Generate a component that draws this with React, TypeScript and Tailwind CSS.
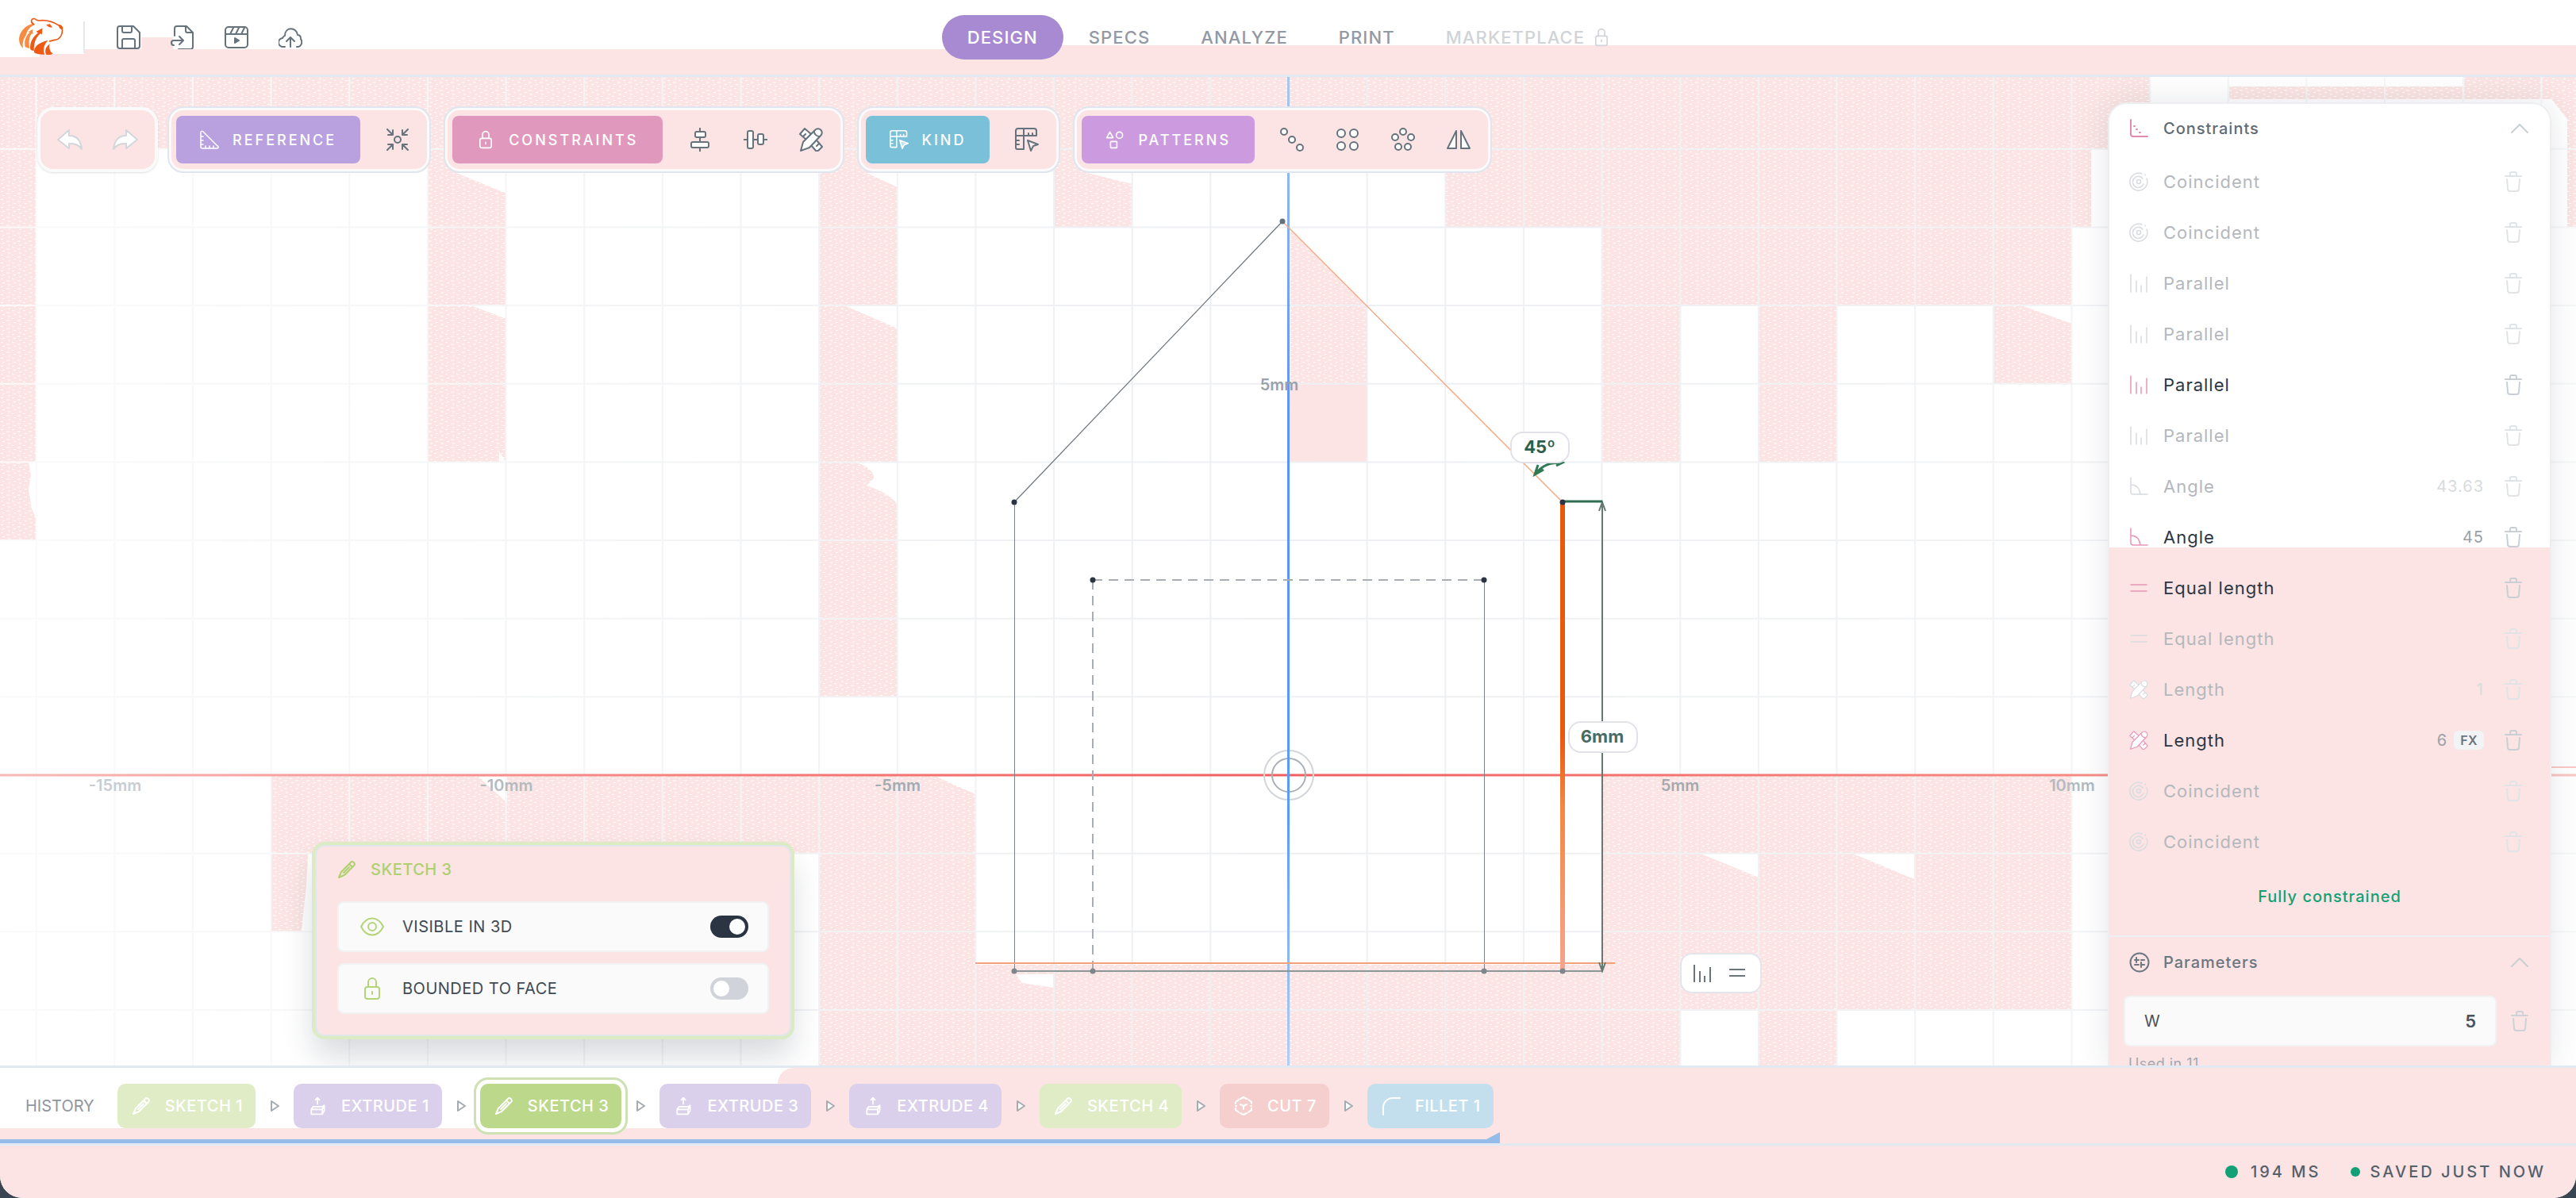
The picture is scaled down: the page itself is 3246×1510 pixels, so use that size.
import { useState, type ReactNode } from 'react'

type IconProps = { className?: string }

function Svg({ className = '', box = '0 0 30 30', children }: { className?: string; box?: string; children: ReactNode }) {
  return (
    <svg
      viewBox={box}
      className={`shrink-0 ${className}`}
      fill="none"
      stroke="currentColor"
      strokeWidth="2"
      strokeLinecap="round"
      strokeLinejoin="round"
      aria-hidden="true"
    >
      {children}
    </svg>
  )
}

const Logo = () => (
  <svg viewBox="70 66 172 148" className="h-[49px] w-[57px] shrink-0" aria-hidden="true">
    <path d="M128 92C96 99 75 124 73 150c0 16 5 28 15 36-3-19 1-34 11-48 5-20 16-34 33-41Z" fill="#f68b42" />
    <path d="M96 180c-5-22 4-42 18-54l-6-2 16-10 2 18-5-2c-10 14-12 32-8 56-8 0-14-2-17-6Z" fill="#f68b42" />
    <path d="M116 190c-3-26 9-46 29-62l-7-5 24-13-2 24-6-4c-17 16-26 36-24 66-7 0-12-2-14-6Z" fill="#ee5a15" />
    <path d="M130 202c0-22 16-36 54-46-16 16-21 34-14 54-17 1-31-2-40-8Z" fill="#ee5a15" />
    <path d="M176 210c-7-18 0-30 13-40-2 18 2 30 13 37-7 4-17 5-26 3Z" fill="#ee5a15" />
    <path
      d="M131 96c-8-4-12-10-11-15 1-8 13-10 18-3l10 3c26-3 52 3 74 17 10 1 17 7 15 15 2 17-5 31-17 39-12 3-22 4-32 8"
      fill="none"
      stroke="#ee5a15"
      strokeWidth="5"
      strokeLinejoin="round"
    />
    <path d="m176 97 14-3 10 12c-6 2-12 1-16-2Z" fill="#ee5a15" />
    <path d="m222 98 15 6 1 12-10-5Z" fill="#ee5a15" />
  </svg>
)

const SaveIcon = ({ className }: IconProps) => (
  <Svg className={className}>
    <path d="M5 1h16l8 8v17a3 3 0 0 1-3 3H4a3 3 0 0 1-3-3V4a3 3 0 0 1 3-3Z" />
    <path d="M7 1v6a2 2 0 0 0 2 2h8a2 2 0 0 0 2-2V1M7 29V19a2 2 0 0 1 2-2h12a2 2 0 0 1 2 2v10" />
  </Svg>
)
const ImportIcon = ({ className }: IconProps) => (
  <Svg className={className}>
    <path d="M5 13V4a3 3 0 0 1 3-3h12l8 8v18a3 3 0 0 1-3 3H10M19 1v6a2 2 0 0 0 2 2h7" />
    <path d="M4 25a3 3 0 0 1 0-6h11M11 14l5 5-5 5" />
  </Svg>
)
const ClipIcon = ({ className }: IconProps) => (
  <Svg className={className}>
    <rect x="1" y="2" width="28" height="26" rx="4" />
    <path d="M1 11h28M11 3 7 11M18 3l-4 8M25 3l-4 8" />
    <path d="m13 16 5 3-5 3Z" fill="currentColor" />
  </Svg>
)
const CloudIcon = ({ className }: IconProps) => (
  <Svg className={className}>
    <path d="M8 27H6a5 5 0 0 1-1-11c1-2 2-3 3-3 0-12 15-11 16-1 3 0 4 2 4 5 3 5 0 10-4 10h-1M15 27V15M10 20l5-5 5 5" />
  </Svg>
)
const LockIcon = ({ className }: IconProps) => (
  <Svg className={className} box="0 0 22 30">
    <rect x="2" y="13" width="18" height="15" rx="3" />
    <path d="M6 13V7a5 5 0 0 1 10 0v6M11 19v3" />
  </Svg>
)
const ArrowIcon = ({ className }: IconProps) => (
  <Svg className={className} box="0 0 32 26">
    <path d="M1 13 15 1v7c10 0 15 7 16 17-4-6-9-7-16-7v6Z" fill="#fff" />
  </Svg>
)
const SetSquareIcon = ({ className }: IconProps) => (
  <Svg className={className} box="0 0 24 24">
    <path d="M1 3c0-2 2-2 3-1l18 18c2 1 1 3-1 3H3a2 2 0 0 1-2-2ZM1 8h3M1 13h3M1 18h3M7 23v-3M12 23v-3M17 23v-3" strokeWidth="1.5" />
  </Svg>
)
const ConvergeIcon = ({ className }: IconProps) => (
  <Svg className={className}>
    <circle cx="15" cy="15" r="4" />
    <path d="m2 2 7 7M9 3v6H3M28 2l-7 7M21 3v6h6M2 28l7-7M9 27v-6H3M28 28l-7-7M21 27v-6h6" />
  </Svg>
)
const AlignVIcon = ({ className }: IconProps) => (
  <Svg className={className}>
    <path d="M15 0v5M15 12v6M15 25v5" />
    <rect x="9" y="5" width="13" height="7" rx="2" fill="#fff" />
    <rect x="4" y="18" width="22" height="7" rx="2" fill="#fff" />
  </Svg>
)
const AlignHIcon = ({ className }: IconProps) => (
  <Svg className={className}>
    <path d="M0 15h5M12 15h6M25 15h5" />
    <rect x="5" y="4" width="7" height="22" rx="2" fill="#fff" />
    <rect x="18" y="8" width="7" height="13" rx="2" fill="#fff" />
  </Svg>
)
const ToolsIcon = ({ className }: IconProps) => (
  <Svg className={className}>
    <path d="M7 1 1 8l8 7M7 1l8 7-5 6M5 11l3-3M15 22l6 7c2 1 3 0 4-1l4-4-6-7" fill="#fff" />
    <path d="M20 3c5-5 12 2 7 7L13 25 2 29l3-11Z" fill="#fff" />
    <path d="M19 5c0 3 3 6 7 6M22 23l3-3" />
  </Svg>
)
const RulerIcon = ({ className }: IconProps) => (
  <Svg className={className}>
    <path d="M4 1h20a3 3 0 0 1 3 3v6H11v17H3a2 2 0 0 1-2-2V4a3 3 0 0 1 3-3ZM1 10h10V1M17 10V7M22 10V7M1 16h4M1 21h4" />
    <path d="m16 16 13 5-6 2-3 6Z" fill="#fff" fillOpacity=".5" />
  </Svg>
)
const ShapesIcon = ({ className }: IconProps) => (
  <Svg className={className}>
    <path d="M7 3 2 12h10Z" />
    <circle cx="22" cy="8" r="5" />
    <rect x="8" y="18" width="10" height="10" rx="1" />
  </Svg>
)
const DiagonalDotsIcon = ({ className }: IconProps) => (
  <Svg className={className}>
    <circle cx="5" cy="5" r="4" fill="#fff" />
    <circle cx="15" cy="15" r="4" fill="#fff" />
    <circle cx="25" cy="25" r="4" fill="#fff" />
  </Svg>
)
const GridDotsIcon = ({ className }: IconProps) => (
  <Svg className={className}>
    <circle cx="7" cy="7" r="5" fill="#fff" />
    <circle cx="23" cy="7" r="5" fill="#fff" />
    <circle cx="7" cy="23" r="5" fill="#fff" />
    <circle cx="23" cy="23" r="5" fill="#fff" />
  </Svg>
)
const RingDotsIcon = ({ className }: IconProps) => (
  <Svg className={className}>
    <circle cx="15" cy="5" r="4" fill="#fff" />
    <circle cx="5" cy="12" r="4" fill="#fff" />
    <circle cx="25" cy="12" r="4" fill="#fff" />
    <circle cx="9" cy="24" r="4" fill="#fff" />
    <circle cx="21" cy="24" r="4" fill="#fff" />
  </Svg>
)
const MirrorIcon = ({ className }: IconProps) => (
  <Svg className={className}>
    <path d="M12 4v22H1ZM18 4v22h11Z" fill="#fff" />
  </Svg>
)
const PencilIcon = ({ className }: IconProps) => (
  <Svg className={className} box="0 0 24 24">
    <path d="M17 3c2-3 7 2 4 4L9 19l-7 3 3-7ZM15 5l4 4M8 16l7-7" />
  </Svg>
)
const ExtrudeIcon = ({ className }: IconProps) => (
  <Svg className={className} box="0 0 24 28">
    <path d="M12 11V2M9 5l3-3 3 3M6 15h13l3-2v8l-3 5H3v-7ZM3 19h16v7M19 19l3-6" />
  </Svg>
)
const CutIcon = ({ className }: IconProps) => (
  <Svg className={className} box="0 0 24 24">
    <path d="m8 3 4-2 4 2M2 9V7l4-3M18 4l4 3v2M2 15v2l4 3M18 20l4-3v-2M8 21l4 2 4-2M12 12v4M12 12l-4-2M12 12l4-2M2 12h1M21 12h1" />
  </Svg>
)
const FilletIcon = ({ className }: IconProps) => (
  <Svg className={className} box="0 0 24 24">
    <path d="M2 23v-9A12 12 0 0 1 14 2h9" />
  </Svg>
)
const EyeIcon = ({ className }: IconProps) => (
  <Svg className={className} box="0 0 30 24">
    <path d="M1 12C8-2 22-2 29 12 22 26 8 26 1 12Z" />
    <circle cx="15" cy="12" r="5" />
  </Svg>
)
const CornerIcon = ({ className }: IconProps) => (
  <Svg className={className} box="0 0 24 24">
    <path d="M2 1v18a3 3 0 0 0 3 3h18" />
    <path d="M6 9h1M9 13h1M13 17h1" />
  </Svg>
)
const CoincidentIcon = ({ className }: IconProps) => (
  <Svg className={className} box="0 0 24 24">
    <path d="M16 2A11 11 0 1 0 22 8M17 8a7 7 0 1 0 1 7M20 3v1" />
    <circle cx="12" cy="12" r="2.5" />
  </Svg>
)
const ParallelIcon = ({ className }: IconProps) => (
  <Svg className={className} box="0 0 24 24">
    <path d="M2 1v22M9 9v14M15 15v8M22 4v19" />
  </Svg>
)
const AngleIcon = ({ className }: IconProps) => (
  <Svg className={className} box="0 0 24 24">
    <path d="M2 1v18a3 3 0 0 0 3 3h18M2 10c7 0 11 4 12 12" />
  </Svg>
)
const EqualIcon = ({ className }: IconProps) => (
  <Svg className={className} box="0 0 24 24">
    <path d="M2 8h20M2 16h20" />
  </Svg>
)
const ParamsIcon = ({ className }: IconProps) => (
  <Svg className={className} box="0 0 26 26">
    <circle cx="13" cy="13" r="11.5" />
    <path d="M7 10h5M9 7v6M15 10h4M7 16h5M15 13v6M15 16h4" />
  </Svg>
)
const TrashIcon = ({ className = '' }: IconProps) => (
  <Svg className={`h-[26px] w-[24px] ${className}`} box="0 0 24 26">
    <path d="M2 6h20M8 6V3a2 2 0 0 1 2-2h4a2 2 0 0 1 2 2v3M4 10l1 12a3 3 0 0 0 3 3h8a3 3 0 0 0 3-3l1-12" />
  </Svg>
)
const ChevronIcon = () => (
  <Svg className="h-[12px] w-[24px] text-[#c9d0d4]" box="0 0 24 12">
    <path d="M2 11 12 1l10 10" />
  </Svg>
)

const fileActions = [
  { label: 'Save', icon: SaveIcon },
  { label: 'Import', icon: ImportIcon },
  { label: 'Render', icon: ClipIcon },
  { label: 'Upload', icon: CloudIcon },
]

const tabs = ['DESIGN', 'SPECS', 'ANALYZE', 'PRINT']

const toolGroups = [
  { label: 'REFERENCE', icon: SetSquareIcon, color: 'bg-[#b9a0de]', tools: [{ label: 'Converge', icon: ConvergeIcon }] },
  {
    label: 'CONSTRAINTS',
    icon: LockIcon,
    color: 'bg-[#e099bd]',
    tools: [
      { label: 'Vertical', icon: AlignVIcon },
      { label: 'Horizontal', icon: AlignHIcon },
      { label: 'Length', icon: ToolsIcon },
    ],
  },
  { label: 'KIND', icon: RulerIcon, color: 'bg-[#7bc0d9]', tools: [{ label: 'Select kind', icon: RulerIcon }] },
  {
    label: 'PATTERNS',
    icon: ShapesIcon,
    color: 'bg-[#cc9bdf]',
    tools: [
      { label: 'Linear', icon: DiagonalDotsIcon },
      { label: 'Grid', icon: GridDotsIcon },
      { label: 'Circular', icon: RingDotsIcon },
      { label: 'Mirror', icon: MirrorIcon },
    ],
  },
]

const constraints = [
  { name: 'Coincident', icon: CoincidentIcon },
  { name: 'Coincident', icon: CoincidentIcon },
  { name: 'Parallel', icon: ParallelIcon },
  { name: 'Parallel', icon: ParallelIcon },
  { name: 'Parallel', icon: ParallelIcon, active: true },
  { name: 'Parallel', icon: ParallelIcon },
  { name: 'Angle', icon: AngleIcon, value: '43.63' },
  { name: 'Angle', icon: AngleIcon, value: '45', active: true },
  { name: 'Equal length', icon: EqualIcon, active: true },
  { name: 'Equal length', icon: EqualIcon },
  { name: 'Length', icon: ToolsIcon, value: '1' },
  { name: 'Length', icon: ToolsIcon, value: '6', fx: true, active: true },
  { name: 'Coincident', icon: CoincidentIcon },
  { name: 'Coincident', icon: CoincidentIcon },
]

const history = [
  { name: 'SKETCH 1', icon: PencilIcon, color: 'bg-[#dfecc6]' },
  { name: 'EXTRUDE 1', icon: ExtrudeIcon, color: 'bg-[#dbd0eb]' },
  { name: 'SKETCH 3', icon: PencilIcon, color: 'bg-[#bcd88a] shadow-[0_0_0_5px_#fff,0_0_0_8px_#cfe0b4]' },
  { name: 'EXTRUDE 3', icon: ExtrudeIcon, color: 'bg-[#dbd0eb]' },
  { name: 'EXTRUDE 4', icon: ExtrudeIcon, color: 'bg-[#dbd0eb]' },
  { name: 'SKETCH 4', icon: PencilIcon, color: 'bg-[#dfecc6]' },
  { name: 'CUT 7', icon: CutIcon, color: 'bg-[#f4cfcd]' },
  { name: 'FILLET 1', icon: FilletIcon, color: 'bg-[#c3dfed]' },
]

// Grid geometry, in drawing units
const CX = 1624
const CY = 977
const STEP = 98.65
const gx = (n: number) => CX + n * STEP
const gy = (n: number) => CY + n * STEP

// Shaded cells: column from/to, row from/to
const shaded = [
  [-17, 11, -9, -8],
  [-17, -16, -8, -3],
  [-11, -10, -8, -4],
  [-6, -5, -8, -1],
  [-3, -2, -8, -7],
  [2, 10.25, -8, -7],
  [4, 10, -7, -6],
  [4, 5, -6, -4],
  [6, 7, -6, -4],
  [9, 10, -6, -5],
  [-13, -4, 0, 1],
  [-13, -12.5, 1, 2],
  [-6, -4, 1, 4],
  [4, 10, 0, 3],
  [-4, 5, 2.42, 4],
  [6, 7, 3, 4],
]

const axisLabels = [
  { text: '-15mm', x: 145, y: 997, color: '#c9cdd1' },
  { text: '-10mm', x: 638, y: 997, color: '#b4babf' },
  { text: '-5mm', x: 1131, y: 997, color: '#a3aab0' },
  { text: '5mm', x: 2117, y: 997, color: '#a3aab0' },
  { text: '10mm', x: 2611, y: 997, color: '#b4babf' },
  { text: '5mm', x: 1612, y: 492, color: '#9aa2a9' },
]

const points = [
  [1278, 633, '#2b3442'],
  [1969, 633, '#2b3442'],
  [1377, 731, '#2b3442'],
  [1870, 731, '#2b3442'],
  [1616, 279, '#66707a'],
  [1278, 1224, '#7d878b'],
  [1377, 1224, '#7d878b'],
  [1870, 1224, '#7d878b'],
  [1969, 1224, '#7d878b'],
] as const

function Drawing() {
  return (
    <svg viewBox="0 97 3246 1246" preserveAspectRatio="xMidYMid slice" className="absolute inset-0 h-full w-full" fill="none">
      <defs>
        <pattern id="stipple" width="14" height="10" patternUnits="userSpaceOnUse">
          <rect width="14" height="10" fill="#fbe4e3" />
          <path d="M1 1.5h3M8 4h4M3 6.5h3M10 9h3" stroke="#fff" strokeWidth="1" />
        </pattern>
        <linearGradient id="grid" x1="0" x2="3246" y1="0" y2="0" gradientUnits="userSpaceOnUse">
          <stop offset="0" stopColor="#fafafa" />
          <stop offset=".35" stopColor="#f1f2f4" />
          <stop offset=".5" stopColor="#eeeff2" />
          <stop offset=".7" stopColor="#f1f2f4" />
          <stop offset="1" stopColor="#f6f7f8" />
        </linearGradient>
        <linearGradient id="xAxis" x1="0" x2="3246" y1="0" y2="0" gradientUnits="userSpaceOnUse">
          <stop offset="0" stopColor="#f8b9b6" />
          <stop offset=".3" stopColor="#f47a76" />
          <stop offset=".5" stopColor="#f0605f" />
          <stop offset=".8" stopColor="#f58a82" />
          <stop offset="1" stopColor="#fbc8c5" />
        </linearGradient>
        <linearGradient id="yAxis" x1="0" x2="0" y1="97" y2="1343" gradientUnits="userSpaceOnUse">
          <stop offset="0" stopColor="#a9c8ee" />
          <stop offset=".2" stopColor="#74a7f5" />
          <stop offset=".35" stopColor="#5b93f7" />
          <stop offset=".75" stopColor="#5b9bf5" />
          <stop offset="1" stopColor="#b1cefa" />
        </linearGradient>
        <linearGradient id="edge" x1="0" x2="0" y1="633" y2="1224" gradientUnits="userSpaceOnUse">
          <stop offset=".5" stopColor="#ea580c" />
          <stop offset=".65" stopColor="#f3883f" />
          <stop offset="1" stopColor="#f4a58e" />
        </linearGradient>
      </defs>

      <rect y="97" width="3246" height="1246" fill="#fff" />
      {shaded.map(([x0, x1, y0, y1]) => (
        <rect key={`${x0}/${y0}`} x={gx(x0)} y={gy(y0)} width={(x1 - x0) * STEP} height={(y1 - y0) * STEP} fill="url(#stipple)" />
      ))}
      <path d="M2809 109h296V97h141v190h-11V150l-20-25H2809Z" fill="url(#stipple)" />
      <path d="M1626 290 1722 386v99h-96Z" fill="url(#stipple)" />
      <path d="M1624 484h98v99h-98Z" fill="#fbe4e3" />
      {/* notches in the shading */}
      <path
        d="M575 218h64v26ZM596 386h42v16ZM638 583l-9-14v14ZM1066 386h65v28ZM1131 583h-53c15 4 24 12 23 20l-9 9c18 6 32 14 39 24ZM1180 979h49v22ZM603 979h36v33ZM2143 1076h73v30ZM2335 1076h77v32ZM1280 1228h48v17l-40-6ZM2550 386h61v22ZM48 583H36l3 16-3 18 4 24 6 14h2ZM1092 218h39v18ZM1370 218h57v14ZM380 1174c4-40 7-60 8-98h10v98Z"
        fill="#fff"
      />

      {Array.from({ length: 33 }, (_, i) => (
        <path key={`v${i}`} d={`M${gx(i - 16)} 97v1246`} stroke="url(#grid)" strokeWidth="2" />
      ))}
      {Array.from({ length: 12 }, (_, i) => (
        <path key={`h${i}`} d={`M0 ${gy(i - 8)}h3246`} stroke="url(#grid)" strokeWidth="2" />
      ))}

      <path d="M0 977h3246" stroke="url(#xAxis)" strokeWidth="3" />
      <path d="M3215 967h31" stroke="#fbc8c5" strokeWidth="2" />
      <circle cx="1624" cy="977" r="21" stroke="#a9afb4" strokeWidth="2" />
      <circle cx="1624" cy="977" r="31" stroke="#d2d5d9" strokeWidth="2" />
      <rect x="1622" y="97" width="3" height="1246" fill="url(#yAxis)" />

      <path d="M1616 279 1278 633" stroke="#6d757c" strokeWidth="1.2" />
      <path d="M1616 279 1969 633" stroke="#f5a986" strokeWidth="1.5" />
      <path d="M1278.5 633v591M1870.5 731v493" stroke="#7d8388" strokeWidth="1" />
      <path d="M1377 731h493M1377 731v493" stroke="#a7adb2" strokeWidth="2" strokeDasharray="12 8" />
      <path d="M1229 1214h806" stroke="#f4a07a" strokeWidth="2" />
      <path d="M1278 1224h741" stroke="#8c9797" strokeWidth="2" />
      <rect x="1966" y="633" width="6" height="591" fill="url(#edge)" />

      <path d="M2019 632v592M2015 644l4-11 4 11M2015 1213l4 11 4-11" stroke="#637a72" strokeWidth="2" />
      <path d="M1969 632h50" stroke="#2f6d50" strokeWidth="3" />
      <path d="M1968 583c-15 0-24 3-33 14M1938 586l-4 12 11-6M1960 579l9 4-8 4" stroke="#2f7a55" strokeWidth="3" />

      {points.map(([x, y, color]) => (
        <circle key={`${x}/${y}`} cx={x} cy={y} r="3.5" fill={color} />
      ))}

      <rect x="1904" y="545" width="73" height="38" rx="15" fill="#fff" stroke="#e0e2e8" strokeWidth="2" />
      <rect x="1977" y="910" width="86" height="38" rx="15" fill="#fff" stroke="#e0e2e8" strokeWidth="2" />
      <g className="font-bold" textAnchor="middle">
        <text x="1940" y="571" fontSize="22" fill="#2f5f4c">45º</text>
        <text x="2019" y="936" fontSize="22" fill="#4b6a60">6mm</text>
      </g>
      <g className="font-semibold" textAnchor="middle">
        {axisLabels.map((l) => (
          <text key={`${l.x}`} x={l.x} y={l.y} fontSize="20" fill={l.color}>
            {l.text}
          </text>
        ))}
      </g>
      <rect x="2118" y="1202" width="101" height="49" rx="14" fill="#fff" stroke="#e2e5ec" strokeWidth="2" />
      <path d="M2135 1216v22M2142 1224v14M2148 1230v8M2155 1219v19M2179 1222h20M2179 1230h20" stroke="#6b757c" strokeWidth="2" />
    </svg>
  )
}

function Toggle({ icon: Icon, label, id, initial }: { icon: (p: IconProps) => ReactNode; label: string; id: string; initial: boolean }) {
  const [on, setOn] = useState(initial)
  return (
    <div className="flex h-16 items-center rounded-lg border-2 border-[#f1f2f3] bg-[#fafafa] px-6">
      <span className="flex w-9 justify-center text-[#b3d479]">
        <Icon className="h-[30px] w-[30px]" />
      </span>
      <label htmlFor={id} className="ml-5 grow text-[20px] tracking-wide text-[#3f4a54]">
        {label}
      </label>
      <input
        id={id}
        type="checkbox"
        checked={on}
        onChange={(e) => setOn(e.target.checked)}
        className="relative h-7 w-12 appearance-none rounded-full bg-[#d0d3d9] before:absolute before:top-1 before:left-1 before:size-5 before:rounded-full before:bg-white checked:bg-[#2b3442] checked:before:left-6"
      />
    </div>
  )
}

export default function App() {
  const [w, setW] = useState('5')

  return (
    <div className="h-screen bg-[#3a4551] font-['Inter',sans-serif]">
      <div className="flex h-full flex-col overflow-hidden rounded-b-[28px] bg-white">
        <header className="relative z-10 flex h-[97px] shrink-0 items-center border-b-3 border-[#e3e9f0] bg-white pl-[23px]">
          <div className="absolute inset-x-0 top-[62px] bottom-0 bg-[#fbe4e3]" />
          <div className="absolute top-[57px] right-0 left-[41%] h-2 bg-[#fbe4e3]" />
          <div className="absolute top-[47px] left-[178px] h-4 w-10 bg-[#fbe4e3]" />
          <div className="absolute top-[60px] left-0 h-3 w-[50px] bg-white" />
          <div className="absolute top-[60px] left-[50px] h-2 w-[56px] bg-white" />
          <div className="relative mb-1">
            <Logo />
          </div>
          <div className="relative mr-[23px] ml-[25px] h-10 w-[2px] bg-[#e5e8ec]" />
          <div className="relative flex gap-1">
            {fileActions.map(({ label, icon: Icon }) => (
              <button key={label} aria-label={label} className="flex size-16 items-center justify-center text-[#66727c]">
                <Icon className="size-[30px]" />
              </button>
            ))}
          </div>
          <nav className="absolute inset-x-0 top-[19px] flex justify-center text-[22px] font-medium tracking-wider text-[#9299a4]">
            {tabs.map((tab, i) => (
              <a key={tab} href="#" className={`flex h-14 items-center px-8 ${i === 0 ? 'rounded-full bg-[#a78ad1] text-white' : ''}`}>
                {tab}
              </a>
            ))}
            <a href="#" className="flex h-14 items-center gap-3 px-8 text-[#d0d3d8]">
              MARKETPLACE
              <LockIcon className="h-6 w-[18px]" />
            </a>
          </nav>
        </header>

        <main className="relative min-h-0 grow overflow-hidden">
          <Drawing />

          <div className="relative flex items-center pt-[37px] pl-[47px]">
            <div className="mr-3 flex h-[82px] items-center gap-[38px] rounded-[20px] border-4 border-[#fafafa] bg-[#fbe4e3] px-[21px] text-[#d3d6da] shadow-sm">
              <button aria-label="Undo">
                <ArrowIcon className="h-[26px] w-8" />
              </button>
              <button aria-label="Redo">
                <ArrowIcon className="h-[26px] w-8 -scale-x-100" />
              </button>
            </div>
            <div className="flex gap-4">
              {toolGroups.map((group) => (
                <div
                  key={group.label}
                  className="flex items-center rounded-[20px] border-2 border-[#e1e6ee] bg-[#fbe4e3] py-[10px] pr-[5px] pl-[9px] inset-ring-3 inset-ring-[#fafafb]"
                >
                  <button className={`mr-3 flex h-[60px] items-center gap-[17px] rounded-lg px-[30px] text-[18px] font-medium tracking-[3px] text-white ${group.color}`}>
                    <group.icon className="size-6" />
                    {group.label}
                  </button>
                  {group.tools.map((tool) => (
                    <button key={tool.label} aria-label={tool.label} className="flex h-[60px] w-[70px] items-center justify-center text-[#66727c]">
                      <tool.icon className="size-[30px]" />
                    </button>
                  ))}
                </div>
              ))}
            </div>
          </div>

          <section className="absolute bottom-[37px] left-[397px] w-[600px] rounded-xl border-2 border-[#e1e6ea] bg-[#fbe4e3] px-[26px] pt-[11px] pb-[26px] shadow-[0_0_0_4px_#dcebc3,0_24px_40px_rgba(30,40,60,0.18)]">
            <h2 className="flex h-9 items-center gap-[18px] text-[20px] font-medium tracking-wide text-[#aed06f]">
              <PencilIcon className="size-6" />
              SKETCH 3
            </h2>
            <div className="mt-[22px] space-y-[14px]">
              <Toggle icon={EyeIcon} label="VISIBLE IN 3D" id="visible" initial={true} />
              <Toggle icon={LockIcon} label="BOUNDED TO FACE" id="bounded" initial={false} />
            </div>
          </section>

          <aside className="absolute top-8 right-[31px] bottom-0 w-[559px] overflow-hidden rounded-t-[24px] border-x-2 border-t-2 border-[#eceef0] bg-[linear-gradient(#fff_559px,#fbe4e3_559px)] shadow-[0_0_40px_rgba(40,50,70,0.12)]">
            <div className="flex h-[66px] items-center pr-[26px] pb-1 pl-[25px]">
              <CornerIcon className="size-6 text-[#e08bb0]" />
              <h2 className="ml-[19px] grow text-[20px] font-medium tracking-[1px] text-[#5f6b76]">Constraints</h2>
              <button aria-label="Collapse constraints">
                <ChevronIcon />
              </button>
            </div>
            <ul>
              {constraints.map((c, i) => (
                <li key={i} className="flex h-16 items-center pr-[34px] pl-[25px]">
                  <c.icon className={`size-6 stroke-[1.5px] ${c.active ? 'text-[#e995b7]' : 'text-[#d8dce0]'}`} />
                  <span className={`ml-[19px] grow text-[22px] tracking-[1px] ${c.active ? 'text-[#2b3644]' : 'text-[#b4b8bd]'}`}>{c.name}</span>
                  {c.value && <span className={`text-[20px] tracking-wider ${c.active ? 'text-[#9aa1a9]' : 'text-[#d8dbde]'}`}>{c.value}</span>}
                  {c.fx && <span className="ml-2 rounded-md bg-[#f1f3f5] px-2 text-[16px] font-semibold tracking-wide text-[#69747d]">FX</span>}
                  <button aria-label="Delete constraint" className="ml-[25px]">
                    <TrashIcon className={c.active ? 'text-[#c9cfd4]' : 'text-[#e0e4e7]'} />
                  </button>
                </li>
              ))}
            </ul>
            <p className="flex h-[86px] items-center justify-center pb-3 text-[20px] font-medium tracking-[1px] text-[#12a176]">Fully constrained</p>
            <div className="flex h-[66px] items-center border-t-2 border-[#eef1f3] pr-[26px] pl-[25px]">
              <ParamsIcon className="size-[26px] text-[#6b7680]" />
              <h2 className="ml-[17px] grow text-[20px] font-medium tracking-[1px] text-[#6b7680]">Parameters</h2>
              <button aria-label="Collapse parameters">
                <ChevronIcon />
              </button>
            </div>
            <div className="mt-[10px] flex items-center pr-[26px] pl-[18px]">
              <div className="flex h-16 w-[470px] items-center rounded-lg border-2 border-[#f1f2f3] bg-[#fafafa] px-6">
                <label htmlFor="param-w" className="text-[20px] text-[#47525c]">
                  W
                </label>
                <input
                  id="param-w"
                  value={w}
                  onChange={(e) => setW(e.target.value)}
                  className="min-w-0 grow bg-transparent text-right text-[22px] font-semibold text-[#47525c] outline-none"
                />
              </div>
              <button aria-label="Delete parameter" className="ml-auto">
                <TrashIcon className="text-[#ccd2d6]" />
              </button>
            </div>
            <p className="mt-2 pl-6 text-[18px] tracking-wide text-[#a3a9af]">Used in 11</p>
          </aside>
        </main>

        <section className="relative flex h-[98px] shrink-0 items-center border-t-3 border-[#e3e9f0] bg-white pl-8">
          <div className="absolute inset-x-0 top-[76px] bottom-0 bg-[#fbe4e3]" />
          <div className="absolute inset-y-0 right-0 left-[980px] rounded-tl-[20px] bg-[#fbe4e3]" />
          <svg viewBox="0 0 1890 14" className="absolute bottom-0 left-0 h-[14px] w-[1890px]" aria-hidden="true">
            <path d="M0 9h1873l17-9v14H0Z" fill="#95bce8" />
          </svg>
          <h2 className="relative mr-[29px] text-[20px] text-[#8f969e]">HISTORY</h2>
          <ol className="relative flex items-center">
            {history.map(({ name, icon: Icon, color }, i) => (
              <li key={name} className="flex items-center">
                {i > 0 && (
                  <svg viewBox="0 0 12 14" className="mx-[18px] h-[14px] w-3" aria-hidden="true">
                    <path d="M2 1v12l9-6Z" fill="#fff" stroke="#a4abb1" strokeWidth="2" strokeLinejoin="round" />
                  </svg>
                )}
                <button className={`flex h-14 items-center gap-[18px] rounded-[10px] pr-4 pl-[18px] text-[20px] font-medium tracking-wide text-white ${color}`}>
                  <Icon className="size-6" />
                  {name}
                </button>
              </li>
            ))}
          </ol>
        </section>

        <footer className="flex h-[69px] shrink-0 items-center justify-end border-t-3 border-[#e3e9f0] bg-[#fbe4e3] pr-[38px] text-[20px] font-medium tracking-[3px] text-[#55606a]">
          <span className="mr-4 size-4 rounded-full bg-[#12a176]" />
          194 MS
          <span className="mx-[18px] h-6 w-[2px] bg-[#efe8ec]" />
          <span className="mr-3 size-3 rounded-full bg-[#12a176]" />
          SAVED JUST NOW
        </footer>
      </div>
    </div>
  )
}
